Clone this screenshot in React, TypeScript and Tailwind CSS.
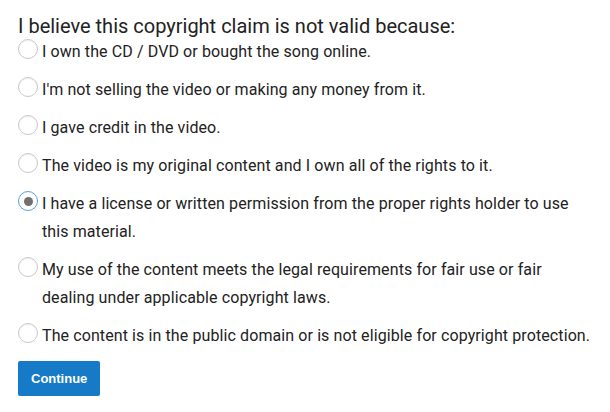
import { useState } from 'react';

const options = [
  'I own the CD / DVD or bought the song online.',
  "I'm not selling the video or making any money from it.",
  'I gave credit in the video.',
  'The video is my original content and I own all of the rights to it.',
  'I have a license or written permission from the proper rights holder to use this material.',
  'My use of the content meets the legal requirements for fair use or fair dealing under applicable copyright laws.',
  'The content is in the public domain or is not eligible for copyright protection.',
];

export default function App() {
  const [selected, setSelected] = useState(4);

  return (
    <div className="min-h-screen bg-white px-[18px] pt-[14px] font-['Roboto',sans-serif] text-[#222]">
      <h1 className="text-[20px] leading-[24px]">I believe this copyright claim is not valid because:</h1>

      {/* Reasons */}
      <div className="flex flex-col gap-[10px]">
        {options.map((label, i) => (
          <label key={i} className="flex cursor-pointer items-start" onClick={() => setSelected(i)}>
            <span
              className={
                i === selected
                  ? 'mt-[1px] mr-[4px] flex h-[20px] w-[20px] shrink-0 items-center justify-center rounded-full border-[1.5px] border-[#5a9fe0] bg-white'
                  : 'mt-[1px] mr-[4px] flex h-[20px] w-[20px] shrink-0 items-center justify-center rounded-full border border-[#c8c8c8] bg-white shadow-[inset_0_1px_1px_rgba(0,0,0,0.06)]'
              }
            >
              {i === selected && <span className="h-[9px] w-[9px] rounded-full bg-[#707070]" />}
            </span>
            <span className="text-[16px] leading-[28px] tracking-[0.1px]">{label}</span>
          </label>
        ))}
      </div>

      <button className="mt-[11px] h-[35px] rounded-[2px] bg-[#167ac6] px-[13px] font-['Liberation_Sans',Arial,sans-serif] text-[13px] font-bold text-white">
        Continue
      </button>
    </div>
  );
}
